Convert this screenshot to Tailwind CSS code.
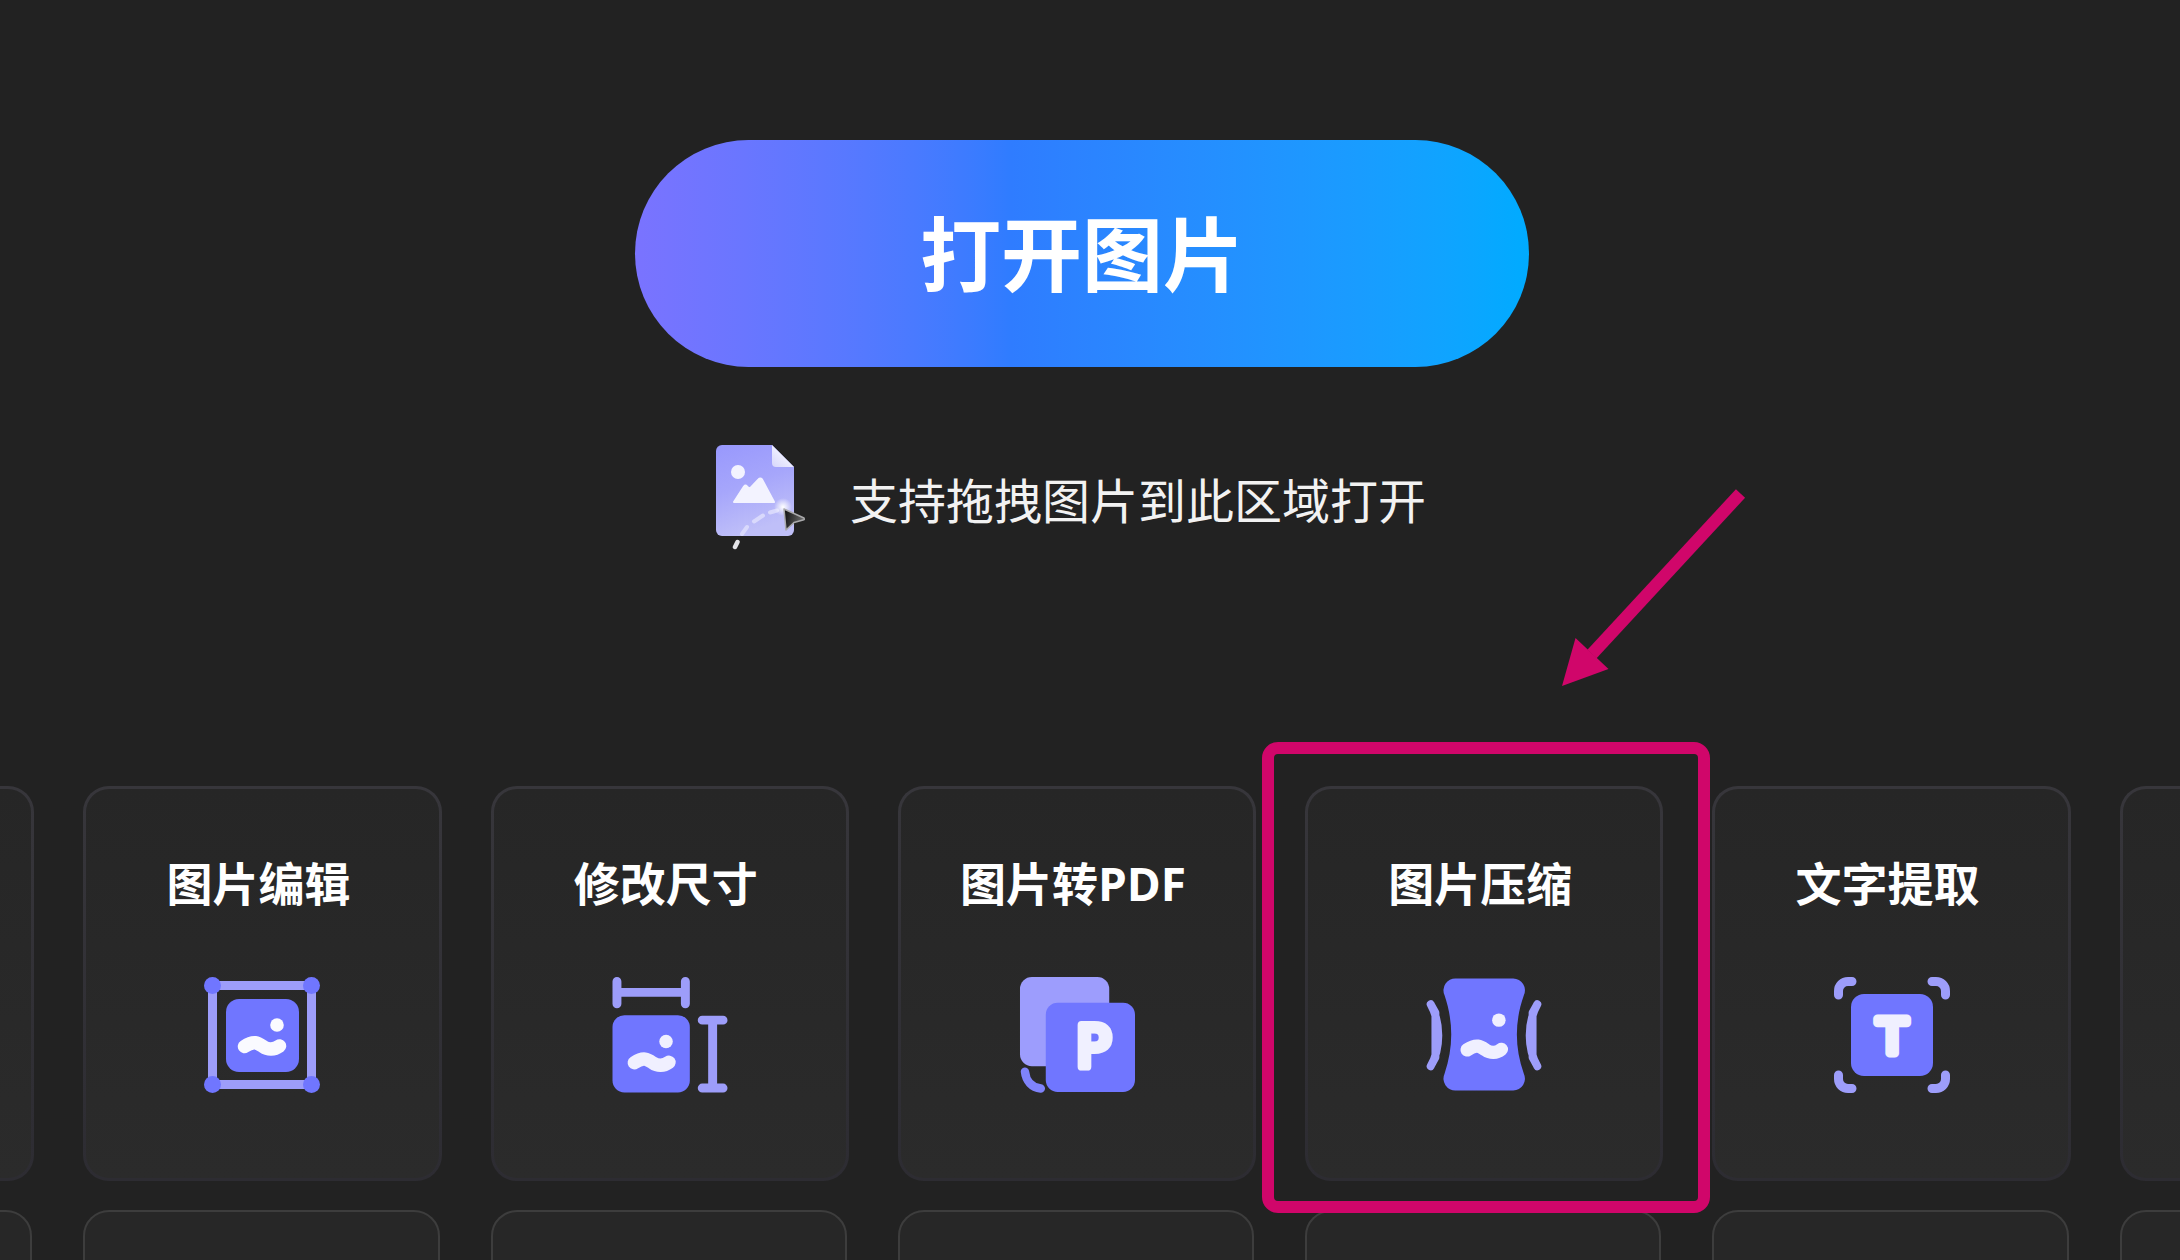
<!DOCTYPE html>
<html lang="zh-CN">
  <head>
    <meta charset="UTF-8" />
    <meta name="viewport" content="width=device-width, initial-scale=1.0" />
    <title>打开图片</title>
    <script src="https://cdn.jsdelivr.net/npm/@tailwindcss/browser@4"></script>
  </head>
  <body class="bg-[#222222] h-screen overflow-hidden font-['Open_Sans','Noto_Sans_CJK_SC',sans-serif] text-white">
    <main class="h-full overflow-hidden pt-[140px]">
      <section class="flex flex-col items-center pr-4">
        <button
          type="button"
          class="w-[41vw] h-[227px] rounded-full bg-linear-to-r from-[#7a73ff] via-[#2f7cff] via-42% to-[#00abff] text-[81px] leading-[96px] font-bold cursor-pointer"
        >
          打开图片
        </button>

        <div class="mt-[77px] mr-6 flex items-center gap-11">
          <svg class="w-[92px] h-[106px]" viewBox="0 0 92 106" fill="none" aria-hidden="true">
            <defs>
              <linearGradient id="page" x1="0" y1="0" x2="0.3" y2="1">
                <stop offset="0" stop-color="#9898fd" />
                <stop offset="0.5" stop-color="#a6a6fb" />
                <stop offset="1" stop-color="#bfbff8" />
              </linearGradient>
              <linearGradient id="fold" x1="0" y1="1" x2="0.6" y2="0.3">
                <stop offset="0" stop-color="#d6d6fb" />
                <stop offset="1" stop-color="#f4f4ff" />
              </linearGradient>
              <linearGradient id="pointer" x1="0" y1="0" x2="1" y2="0.2">
                <stop offset="0.1" stop-color="#161616" />
                <stop offset="1" stop-color="#6a6a6a" />
              </linearGradient>
              <radialGradient id="glow">
                <stop offset="0" stop-color="#fff" />
                <stop offset="1" stop-color="#fff" stop-opacity="0" />
              </radialGradient>
            </defs>
            <path d="M8 1H58L80 23V86a6 6 0 0 1-6 6H8a6 6 0 0 1-6-6V7a6 6 0 0 1 6-6Z" fill="url(#page)" />
            <path d="M58 1L80 23H62a4 4 0 0 1-4-4Z" fill="url(#fold)" />
            <circle cx="24" cy="28" r="7" fill="#f3f3ff" />
            <path
              d="M20 58L30 42.500Q31.500 40.500 33 42.500L35.500 45L44.500 35.500Q46.300 33.500 48 35.500L60 58Z"
              fill="#f3f3ff"
              stroke="#f3f3ff"
              stroke-width="2"
              stroke-linejoin="round"
            />
            <path d="M21 103L23.500 98" stroke="#e4e4e8" stroke-width="4.500" stroke-linecap="round" />
            <path d="M28 90L33 83M40 77.500L49 71.500M56 68.500L63 66.500" stroke="#d9d9fc" stroke-width="4" stroke-linecap="round" />
            <circle cx="69" cy="63" r="9" fill="url(#glow)" />
            <path
              d="M70 65L90 74Q91 76 89 76L80 78.500L72 86Z"
              fill="url(#pointer)"
              stroke="#a9a9ab"
              stroke-width="1.500"
              stroke-linejoin="round"
            />
          </svg>
          <p class="pt-2 text-[48px] leading-[64px] text-[#f2f2f2]">支持拖拽图片到此区域打开</p>
        </div>
      </section>

      <!-- tool cards, the outer columns run off both sides of the window -->
      <ul class="mt-[236px] -ml-[324px] -mr-[298px] grid grid-cols-7 gap-x-[49px] gap-y-[29px]">
        <li class="h-[395px] rounded-[26px] bg-linear-to-b from-[#37363b] to-[#2d2c32] p-[3px]">
          <div class="h-full rounded-[23px] bg-linear-to-b from-[#262626] to-[#2b2b2b]"></div>
        </li>

        <li class="h-[395px] rounded-[26px] bg-linear-to-b from-[#37363b] to-[#2d2c32] p-[3px]">
          <button type="button" class="flex h-full w-full flex-col items-center rounded-[23px] bg-linear-to-b from-[#262626] to-[#2b2b2b] pt-16 cursor-pointer">
            <span class="pr-2 text-[46px] leading-[60px] font-bold">图片编辑</span>
            <svg class="mt-16 size-[116px]" viewBox="0 0 116 116" fill="none" aria-hidden="true">
              <rect x="8.500" y="8.500" width="99" height="99" stroke="#9d9dfa" stroke-width="9" />
              <g fill="#7076ff">
                <circle cx="8.500" cy="8.500" r="8.500" />
                <circle cx="107.500" cy="8.500" r="8.500" />
                <circle cx="8.500" cy="107.500" r="8.500" />
                <circle cx="107.500" cy="107.500" r="8.500" />
                <rect x="22" y="22" width="73" height="73" rx="13" />
              </g>
              <circle cx="73" cy="48" r="6.800" fill="#fafaff" />
              <path d="M40.500 69.500C50 63 54 66 59 69.500C64 73 70 73 75.500 69" stroke="#fafaff" stroke-width="13.500" stroke-linecap="round" />
            </svg>
          </button>
        </li>

        <li class="h-[395px] rounded-[26px] bg-linear-to-b from-[#37363b] to-[#2d2c32] p-[3px]">
          <button type="button" class="flex h-full w-full flex-col items-center rounded-[23px] bg-linear-to-b from-[#262626] to-[#2b2b2b] pt-16 cursor-pointer">
            <span class="pr-2 text-[46px] leading-[60px] font-bold">修改尺寸</span>
            <svg class="mt-16 size-[116px]" viewBox="0 0 117 117" fill="none" aria-hidden="true">
              <path
                d="M5 4.500V27M74 4.500V27M5 15.500H74M91 43.500H112M91 112H112M101.500 43.500V112"
                stroke="#9d9dfa"
                stroke-width="9"
                stroke-linecap="round"
              />
              <rect x="0.500" y="38.500" width="78" height="78" rx="12" fill="#7076ff" />
              <circle cx="54.500" cy="65" r="6.800" fill="#f0f0ff" />
              <path d="M22.500 86.500C32 80 36 83 41 86.500C46 90 52 90 57.500 86" stroke="#f0f0ff" stroke-width="13.500" stroke-linecap="round" />
            </svg>
          </button>
        </li>

        <li class="h-[395px] rounded-[26px] bg-linear-to-b from-[#37363b] to-[#2d2c32] p-[3px]">
          <button type="button" class="flex h-full w-full flex-col items-center rounded-[23px] bg-linear-to-b from-[#262626] to-[#2b2b2b] pt-16 cursor-pointer">
            <span class="pr-2 text-[46px] leading-[60px] font-bold">图片转PDF</span>
            <svg class="mt-16 size-[116px]" viewBox="0 0 117 117" fill="none" aria-hidden="true">
              <rect x="1" y="0" width="90" height="90" rx="12" fill="#9d9dfd" />
              <rect x="27" y="26" width="90" height="90" rx="12" fill="#7076ff" />
              <path d="M6 95.500C7 105 13 111.500 22 112.500" stroke="#7f83fb" stroke-width="8.500" stroke-linecap="round" />
              <text
                x="75"
                y="91"
                text-anchor="middle"
                class="font-['DejaVu_Sans',sans-serif] text-[58px]"
                fill="#f0f0ff"
                stroke="#f0f0ff"
                stroke-width="8"
                stroke-linejoin="round"
              >P</text>
            </svg>
          </button>
        </li>

        <li class="relative z-10 h-[395px] rounded-[26px] bg-linear-to-b from-[#37363b] to-[#2d2c32] p-[3px]">
          <button type="button" class="flex h-full w-full flex-col items-center rounded-[23px] bg-linear-to-b from-[#262626] to-[#2b2b2b] pt-16 cursor-pointer">
            <span class="pr-2 text-[46px] leading-[60px] font-bold">图片压缩</span>
            <svg class="mt-16 size-[116px]" viewBox="0 0 117 117" fill="none" aria-hidden="true">
              <path
                d="M30 1.500H88A12 12 0 0 1 98.700 18.500C89.300 45 89.300 71 98.700 97.500A12 12 0 0 1 88 114.500H30A12 12 0 0 1 18.700 97.500C27.700 71 27.700 45 18.700 18.500A12 12 0 0 1 30 1.500Z"
                fill="#7076ff"
              />
              <g fill="#9d9dfa" stroke="#9d9dfa" stroke-width="8" stroke-linejoin="round">
                <path d="M4.700 27.500C15 46 15 72 4.700 90L9.500 81V36Z" />
                <path d="M112.300 27.500C102 46 102 72 112.300 90L107.500 81V36Z" />
              </g>
              <circle cx="73.500" cy="43.500" r="6.800" fill="#f0f0ff" />
              <path d="M41.500 73.500C51 67 55 70 60 73.500C65 77 71 77 76 73" stroke="#f0f0ff" stroke-width="13.500" stroke-linecap="round" />
            </svg>
          </button>
          <!-- callout frame and arrow -->
          <div class="pointer-events-none absolute -top-11 -left-[43px] -right-[47px] -bottom-8 rounded-2xl border-[12px] border-[#d0066a]"></div>
          <svg class="pointer-events-none absolute -top-[298px] left-[257px] w-[184px] h-[200px]" viewBox="0 0 184 200" aria-hidden="true">
            <path d="M178.500 5.500L30 166" stroke="#d0066a" stroke-width="12.500" />
            <path d="M0 198L13.500 150L46.500 181Z" fill="#d0066a" />
          </svg>
        </li>

        <li class="h-[395px] rounded-[26px] bg-linear-to-b from-[#37363b] to-[#2d2c32] p-[3px]">
          <button type="button" class="flex h-full w-full flex-col items-center rounded-[23px] bg-linear-to-b from-[#262626] to-[#2b2b2b] pt-16 cursor-pointer">
            <span class="pr-2 text-[46px] leading-[60px] font-bold">文字提取</span>
            <svg class="mt-16 size-[116px]" viewBox="0 0 116 116" fill="none" aria-hidden="true">
              <path
                d="M4.500 18V14A9.500 9.500 0 0 1 14 4.500H18M98 4.500H102A9.500 9.500 0 0 1 111.500 14V18M111.500 98V102A9.500 9.500 0 0 1 102 111.500H98M18 111.500H14A9.500 9.500 0 0 1 4.500 102V98"
                stroke="#9d9dfa"
                stroke-width="9"
                stroke-linecap="round"
              />
              <rect x="17" y="17" width="82" height="82" rx="13" fill="#7076ff" />
              <text
                x="58"
                y="76"
                text-anchor="middle"
                class="font-['DejaVu_Sans',sans-serif] text-[47px]"
                fill="#f0f0ff"
                stroke="#f0f0ff"
                stroke-width="9"
                stroke-linejoin="round"
              >T</text>
            </svg>
          </button>
        </li>

        <li class="h-[395px] rounded-[26px] bg-linear-to-b from-[#37363b] to-[#2d2c32] p-[3px]">
          <div class="h-full rounded-[23px] bg-linear-to-b from-[#262626] to-[#2b2b2b]"></div>
        </li>

        <!-- second row, only the top edge is in view -->
        <li class="h-[395px] rounded-[26px] border-2 border-[#3d3d3d] bg-[#272727] mr-[2px]"></li>
        <li class="h-[395px] rounded-[26px] border-2 border-[#3d3d3d] bg-[#272727] mr-[2px]"></li>
        <li class="h-[395px] rounded-[26px] border-2 border-[#3d3d3d] bg-[#272727] mr-[2px]"></li>
        <li class="h-[395px] rounded-[26px] border-2 border-[#3d3d3d] bg-[#272727] mr-[2px]"></li>
        <li class="h-[395px] rounded-[26px] border-2 border-[#3d3d3d] bg-[#272727] mr-[2px]"></li>
        <li class="h-[395px] rounded-[26px] border-2 border-[#3d3d3d] bg-[#272727] mr-[2px]"></li>
        <li class="h-[395px] rounded-[26px] border-2 border-[#3d3d3d] bg-[#272727] mr-[2px]"></li>
      </ul>
    </main>
  </body>
</html>
